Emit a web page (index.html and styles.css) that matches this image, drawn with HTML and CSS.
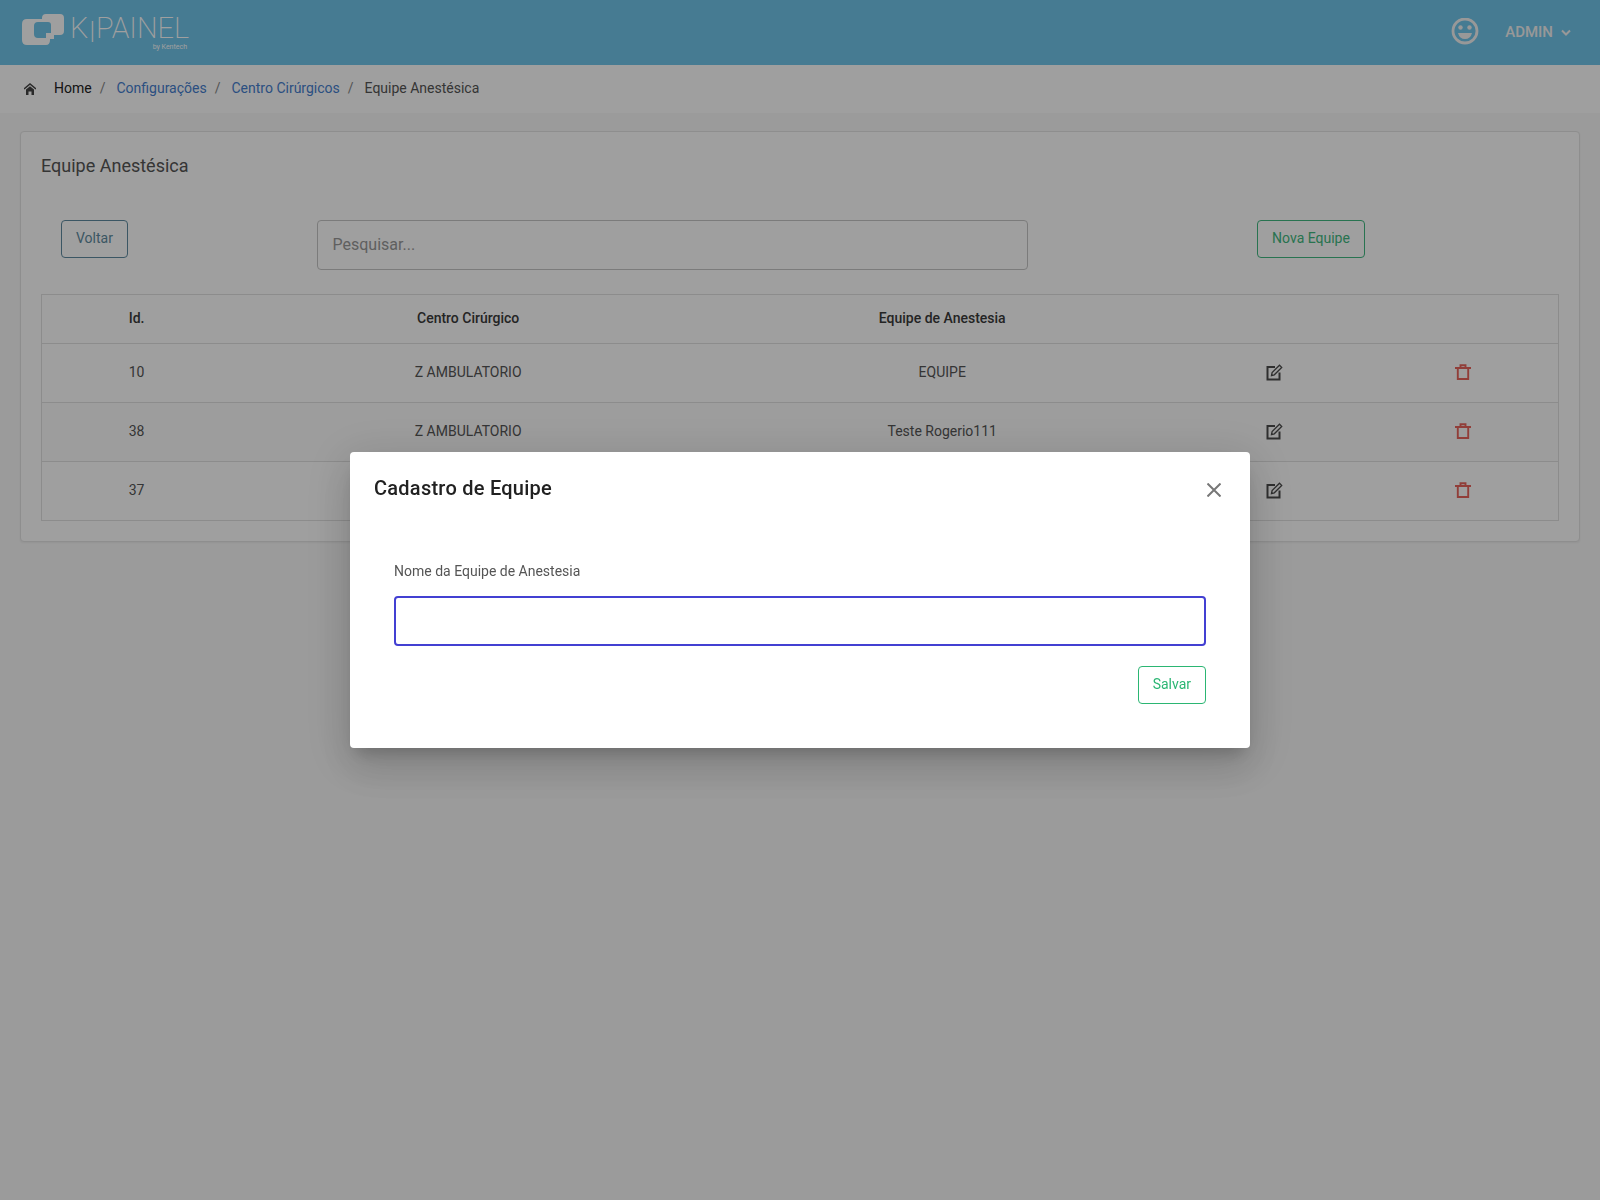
FILE: index.html
```html
<!DOCTYPE html>
<html lang="pt-BR">
<head>
<meta charset="utf-8">
<title>KiPainel - Equipe Anestésica</title>
<link rel="stylesheet" href="styles.css">
</head>
<body>
<svg class="sprite" aria-hidden="true">
  <symbol id="edit" viewBox="0 0 18 18"><path d="M10 3H2.500v12.500h12V8.500" fill="none" stroke="currentColor" stroke-width="2"/><path d="M6.500 11.500l.6-3 7.400-7.300 2.200 2.200-7.400 7.400z" fill="none" stroke="currentColor" stroke-width="1.300"/></symbol>
  <symbol id="trash" viewBox="0 0 18 18"><path d="M1 4h16M6.500 3.500V1.300h5v2.200M3.800 4v11h10.400V4" fill="none" stroke="currentColor" stroke-width="1.900"/></symbol>
</svg>
<header class="topbar">
  <a class="brand" href="#" aria-label="KiPainel by Kentech">
    <svg width="170" height="42" viewBox="0 0 170 42">
      <path fill="#fff" fill-rule="evenodd" d="M5 8h15V7q0-4 4-4h14q4 0 4 4v13q0 4-4 4h-6v4h-4v1q0 5-4 5H5q-5 0-5-5V13q0-5 5-5zm11 3q-4 0-4 4v8q0 4 4 4h8v-5h5v-8q0-3-3-3z"/>
      <text class="brand-name" x="48" y="27">K<tspan dy="4">I</tspan><tspan dy="-4">PAINEL</tspan></text>
      <text class="brand-by" x="165" y="38" text-anchor="end">by Kentech</text>
    </svg>
  </a>
  <button class="user" type="button">
    <svg width="28" height="28" viewBox="0 0 28 28"><circle cx="14" cy="13" r="12" fill="none" stroke="currentColor" stroke-width="2.800"/><circle cx="9.500" cy="9.500" r="2.200" fill="currentColor"/><circle cx="18.500" cy="9.500" r="2.200" fill="currentColor"/><path d="M7 15h14q-1.500 6-7 6t-7-6z" fill="currentColor"/></svg>
    <span>ADMIN</span>
    <svg class="caret" width="10" height="8" viewBox="0 0 10 8"><path d="M1 1.500l4 4 4-4" fill="none" stroke="currentColor" stroke-width="2"/></svg>
  </button>
</header>
<nav class="crumbs" aria-label="Navegação">
  <svg class="home" width="12" height="12" viewBox="0 0 12 12"><path d="M0 6l6-5 6 5" fill="none" stroke="currentColor" stroke-width="1.500"/><path d="M2 6.500l4-3.300 4 3.300V12H7.500V8.500h-3V12H2z" fill="currentColor"/></svg>
  <ol>
    <li><a class="first" href="#">Home</a></li>
    <li><a href="#">Configurações</a></li>
    <li><a href="#">Centro Cirúrgicos</a></li>
    <li>Equipe Anestésica</li>
  </ol>
</nav>
<main class="card">
  <h1>Equipe Anestésica</h1>
  <div class="tools">
    <div class="tool"><button class="btn btn-back" type="button">Voltar</button></div>
    <div class="tool"><input class="field" type="search" placeholder="Pesquisar..." aria-label="Pesquisar"></div>
    <div class="tool tool-new"><button class="btn btn-new" type="button">Nova Equipe</button></div>
  </div>
  <table>
    <colgroup><col class="narrow"><col class="wide"><col class="wide"><col class="narrow"><col class="narrow"></colgroup>
    <thead><tr><th>Id.</th><th>Centro Cirúrgico</th><th>Equipe de Anestesia</th><th></th><th></th></tr></thead>
    <tbody>
      <tr><td>10</td><td>Z AMBULATORIO</td><td>EQUIPE</td><td><button class="icon" type="button" aria-label="Editar"><svg><use href="#edit"/></svg></button></td><td><button class="icon danger" type="button" aria-label="Excluir"><svg><use href="#trash"/></svg></button></td></tr>
      <tr><td>38</td><td>Z AMBULATORIO</td><td>Teste Rogerio111</td><td><button class="icon" type="button" aria-label="Editar"><svg><use href="#edit"/></svg></button></td><td><button class="icon danger" type="button" aria-label="Excluir"><svg><use href="#trash"/></svg></button></td></tr>
      <tr><td>37</td><td></td><td></td><td><button class="icon" type="button" aria-label="Editar"><svg><use href="#edit"/></svg></button></td><td><button class="icon danger" type="button" aria-label="Excluir"><svg><use href="#trash"/></svg></button></td></tr>
    </tbody>
  </table>
</main>
<div class="backdrop">
  <section class="dialog" role="dialog" aria-modal="true" aria-labelledby="dialog-title">
    <div class="dialog-head">
      <h2 id="dialog-title">Cadastro de Equipe</h2>
      <button class="close" type="button" aria-label="Fechar"><svg width="14" height="14" viewBox="0 0 14 14"><path d="M.5.5l13 13M13.500.5l-13 13" stroke="currentColor" stroke-width="2"/></svg></button>
    </div>
    <form class="form">
      <label for="team">Nome da Equipe de Anestesia</label>
      <input class="field active" id="team" type="text">
      <button class="btn btn-green" type="button">Salvar</button>
    </form>
  </section>
</div>
</body>
</html>
```

FILE: styles.css
```css
* { box-sizing: border-box; }
body {
  margin: 0;
  min-height: 100vh;
  background: #f8f8f8;
  color: #555;
  font: 14px/20px Roboto, sans-serif;
}
button, input { font-family: inherit; }
a { color: #467fcf; text-decoration: none; }
h1, h2 { margin: 0; }
.sprite { display: none; }

.topbar {
  display: flex;
  align-items: center;
  justify-content: space-between;
  height: 65px;
  padding: 0 29px 2px 22px;
  background: #70c5ea;
}
.brand { display: flex; }
.brand-name { font-size: 29px; font-weight: 200; fill: #fff; }
.brand-by { font-size: 7px; fill: #fff; }
.user {
  display: flex;
  align-items: center;
  padding: 0;
  border: 0;
  background: none;
  color: #f4f4f4;
  font-size: 15px;
  font-weight: 500;
}
.user span { margin-left: 26px; }
.caret { margin: 2px 0 0 8px; }

.crumbs {
  display: flex;
  align-items: center;
  height: 48px;
  padding: 0 24px;
  background: #fff;
}
.home { margin-right: 18px; color: #444; }
.crumbs ol { display: flex; margin: 0; padding: 0 0 2px; list-style: none; }
.crumbs li + li::before { content: "/"; padding: 0 11px 0 8px; color: #868686; }
.crumbs .first { color: #222; }

.card {
  margin: 18px 20px;
  padding: 20px;
  border: 1px solid #e4e4e4;
  border-radius: 4px;
  background: #fff;
  box-shadow: 0 1px 2px rgba(0, 0, 0, .05);
}
h1 { padding: 2px 0; font-size: 18px; font-weight: 400; line-height: 24px; }
.tools {
  display: grid;
  grid-template-columns: 17fr 50fr 34fr;
  margin: 40px 0 24px;
}
.tool { padding: 0 20px; }
.tool-new { padding-left: 35px; text-align: center; }
.btn {
  height: 38px;
  padding: 0 14px 2px;
  border: 1px solid;
  border-radius: 4px;
  background: none;
  font-size: 14px;
}
.btn-back { color: #5f8ba0; }
.btn-green { color: #2bb673; }
.btn-new { color: #40b880; }
.field {
  display: block;
  width: 100%;
  height: 50px;
  padding: 0 15px 2px;
  border: 1px solid #c6c6c6;
  border-radius: 4px;
  background: #fff;
  font-size: 16px;
}
.field::placeholder { color: #999; opacity: 1; }

table {
  width: 100%;
  border: 1px solid #e0e0e0;
  border-collapse: collapse;
  table-layout: fixed;
  text-align: center;
}
.narrow { width: 12.5%; }
.wide { width: 31.25%; }
th, td { padding: 0 8px 2px; border-bottom: 1px solid #e0e0e0; }
th { height: 49px; color: #3a3a3a; font-weight: 500; }
td { height: 59px; }
tbody tr:nth-child(even) { background: #fcfcfc; }
.icon { padding: 0; border: 0; background: none; color: #4c4c4c; vertical-align: middle; }
.icon svg { display: block; width: 18px; height: 18px; }
.danger { color: #e8645c; }

.backdrop {
  position: fixed;
  inset: 0;
  display: grid;
  place-items: center;
  background: rgba(0, 0, 0, .375);
}
.dialog {
  width: 900px;
  max-width: 80vw;
  border-radius: 4px;
  background: #fff;
  box-shadow: 0 11px 15px -7px rgba(0, 0, 0, .2), 0 24px 38px 3px rgba(0, 0, 0, .07), 0 9px 46px 8px rgba(0, 0, 0, .12);
}
.dialog-head {
  display: flex;
  align-items: center;
  justify-content: space-between;
  padding: 20px 29px 20px 24px;
}
h2 { color: #212121; font-size: 20px; font-weight: 500; line-height: 32px; letter-spacing: .0125em; }
.close { padding: 4px 0 0; border: 0; background: none; color: #777; }
.close svg { display: block; }
.form {
  display: flex;
  flex-direction: column;
  align-items: flex-end;
  gap: 20px;
  padding: 37px 44px 44px;
}
.form label { align-self: flex-start; margin-bottom: -5px; }
.field.active { border: 2px solid #4340d2; outline: 0; }
```
